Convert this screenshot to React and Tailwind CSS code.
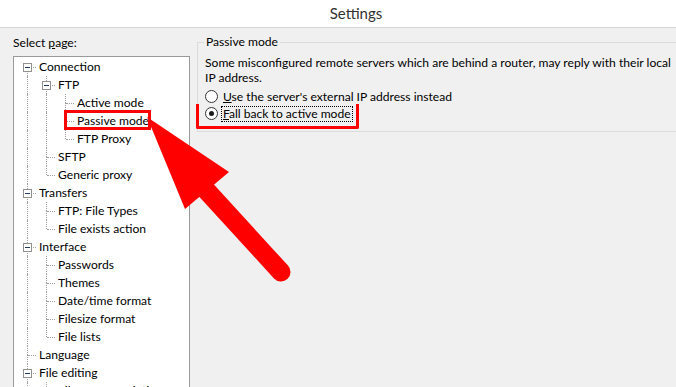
import React from "react";

const tree = [
  {
    label: "Connection",
    children: [
      {
        label: "FTP",
        children: [
          { label: "Active mode" },
          { label: "Passive mode", marked: true },
          { label: "FTP Proxy" },
        ],
      },
      { label: "SFTP" },
      { label: "Generic proxy" },
    ],
  },
  {
    label: "Transfers",
    children: [{ label: "FTP: File Types" }, { label: "File exists action" }],
  },
  {
    label: "Interface",
    children: [
      { label: "Passwords" },
      { label: "Themes" },
      { label: "Date/time format" },
      { label: "Filesize format" },
      { label: "File lists" },
    ],
  },
  { label: "Language" },
  { label: "File editing", children: [{ label: "Filetype associations" }] },
  { label: "Updates" },
];

// flatten the tree into rows, remembering which ancestor lines keep going
const flatten = (nodes, guides = [], out = []) => {
  nodes.forEach((node, i) => {
    const last = i === nodes.length - 1;
    out.push({
      ...node,
      guides,
      last,
      first: guides.length === 0 && i === 0,
    });
    if (node.children) flatten(node.children, [...guides, !last], out);
  });
  return out;
};

const rows = flatten(tree);

const TreeRow = ({ row }) => (
  <div className="flex h-[18px] items-center">
    {row.guides.map((g, i) => (
      <span key={i} className="relative h-full w-[19px] shrink-0">
        {g && (
          <span className="absolute left-[9px] top-0 bottom-0 border-l border-dotted border-[#a0a0a0]" />
        )}
      </span>
    ))}
    <span className="relative h-full w-[19px] shrink-0">
      {!row.first && (
        <span className="absolute left-[9px] top-0 h-[9px] border-l border-dotted border-[#a0a0a0]" />
      )}
      {!row.last && (
        <span className="absolute left-[9px] top-[9px] bottom-0 border-l border-dotted border-[#a0a0a0]" />
      )}
      <span className="absolute left-[10px] right-[1px] top-[9px] border-t border-dotted border-[#a0a0a0]" />
      {row.children && (
        <span className="absolute left-[5px] top-[5px] h-[9px] w-[9px] border border-[#919191] bg-white">
          <span className="absolute left-[1px] top-[3px] h-px w-[5px] bg-[#1e395b]" />
        </span>
      )}
    </span>
    <span className="ml-[2px] whitespace-nowrap leading-[16px]">{row.label}</span>
  </div>
);

const Radio = ({ checked, children, focused }) => (
  <label className="flex h-[17px] items-center gap-[3px]">
    <span className="flex h-[13px] w-[13px] shrink-0 items-center justify-center rounded-full border border-[#333] bg-white">
      {checked && <span className="h-[5px] w-[5px] rounded-full bg-[#1a1a1a]" />}
    </span>
    <span
      className={
        "whitespace-nowrap px-px leading-[14px] " +
        (focused ? "border border-dotted border-black" : "border border-transparent")
      }
    >
      {children}
    </span>
  </label>
);

const Arrow = () => (
  <svg
    className="pointer-events-none absolute left-0 top-0"
    width="676"
    height="387"
    viewBox="0 0 676 387"
  >
    <polygon points="147,117 229,172 185,209" fill="#ff0000" />
    <line
      x1="206"
      y1="190"
      x2="281"
      y2="272"
      stroke="#ff0000"
      strokeWidth="19"
      strokeLinecap="round"
    />
  </svg>
);

export default function App() {
  return (
    <div className="relative h-[387px] w-[676px] overflow-hidden bg-[#f0f0f0] font-['Lato','Noto_Sans',sans-serif] text-[12.1px] text-black">
      <div className="flex h-[28px] items-center justify-center border-b border-[#d6d6d6] bg-white pl-[36px] text-[15px] text-[#333]">
        Settings
      </div>

      <div className="flex">
        <div className="w-[184px] shrink-0 pl-[13px] pt-[7px]">
          <div className="h-[16px] leading-[16px]">
            Select <span className="underline">p</span>age:
          </div>
          <div className="relative mt-[5px] h-[400px] w-[177px] border border-[#9a9a9a] bg-white pl-[4px] pt-[1px]">
            {rows.map((row) => (
              <TreeRow key={row.label} row={row} />
            ))}
            <div className="absolute left-[50px] top-[53px] h-[20px] w-[87px] border-[3px] border-[#ff0000]" />
          </div>
        </div>

        <div className="ml-[13px] mt-[14px] w-[520px] shrink-0">
          <div className="relative h-[90px] border border-[#dcdcdc] pl-[7px] pt-[12px]">
            <span className="absolute -top-[9px] left-[6px] bg-[#f0f0f0] px-[2px] leading-[16px]">
              Passive mode
            </span>
            <p className="leading-[15px]">
              Some misconfigured remote servers which are behind a router, may reply with their local
              <br />
              IP address.
            </p>
            <div className="mt-[3px]">
              <Radio>
                <span className="underline">U</span>se the server's external IP address instead
              </Radio>
              <Radio checked focused>
                <span className="underline">F</span>all back to active mode
              </Radio>
            </div>
            <div className="absolute left-[-2px] top-[61px] h-[25px] w-[163px] rounded-b-[2px] border-x-[3px] border-b-[3px] border-[#ff0000]" />
          </div>
        </div>
      </div>

      <Arrow />
    </div>
  );
}
